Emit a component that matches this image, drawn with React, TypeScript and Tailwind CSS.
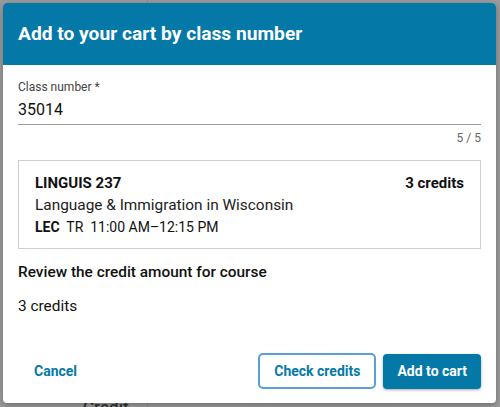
import React from "react";

export default function App() {
  return (
    <div
      className="relative w-[500px] h-[407px] bg-[#9b9b9b] overflow-hidden"
      style={{ fontFamily: "Roboto, 'Noto Sans', sans-serif" }}
    >
      {/* page content behind the overlay */}
      <div className="absolute left-[147px] top-0 w-px h-[407px] bg-[#8c8c8c]" />
      <div className="absolute left-[83px] top-[399px] text-[17px] font-medium text-[#333] leading-none">
        Credit
      </div>

      {/* dialog */}
      <div className="relative ml-[3px] mt-[3px] w-[493px] h-[400px] bg-white rounded-[4px] overflow-hidden shadow-[0_2px_6px_rgba(0,0,0,0.3)] flex flex-col">
        <div className="h-[62px] bg-[#0479a8] flex items-center px-[15px]">
          <h1 className="text-white text-[19.2px] font-bold leading-none">
            Add to your cart by class number
          </h1>
        </div>

        <div className="px-[15px] pt-[15px] flex flex-col">
          <label className="text-[12px] leading-[14px] text-[#444]">Class number *</label>
          <div className="mt-[6px] text-[16px] leading-[20px] text-[#111] pb-[4px] border-b border-[#9a9a9a]">
            35014
          </div>
          <div className="self-end mt-[6px] text-[12px] leading-[14px] text-[#666]">5 / 5</div>

          <div className="mt-[15px] border border-[#cfcfcf] px-[16px] pt-[12px] pb-[11px] flex flex-col">
            <div className="flex justify-between items-baseline">
              <span className="text-[15px] font-bold text-[#111] leading-[20px]">LINGUIS 237</span>
              <span className="text-[15px] font-bold text-[#111] leading-[20px]">3 credits</span>
            </div>
            <div className="mt-[2px] text-[15.4px] text-[#222] leading-[20px]">
              Language &amp; Immigration in Wisconsin
            </div>
            <div className="mt-[2px] text-[14px] text-[#111] leading-[20px] whitespace-pre">
              <span className="font-bold">LEC</span>
              {"  TR  11:00 AM\u201312:15 PM"}
            </div>
          </div>

          <div className="mt-[13px] text-[15.4px] font-medium text-[#111] leading-[20px]">
            Review the credit amount for course
          </div>
          <div className="mt-[14px] text-[15.4px] text-[#111] leading-[20px]">3 credits</div>
        </div>

        <div className="mt-auto mb-[14px] px-[15px] flex items-center">
          <button className="px-[16px] h-[35px] text-[14px] font-bold text-[#0479a8]">Cancel</button>
          <div className="flex-1" />
          <button className="h-[36px] px-[14px] rounded-[5px] border-2 border-[#5a9fd8] text-[14px] font-bold text-[#0479a8] bg-white">
            Check credits
          </button>
          <button className="ml-[7px] h-[35px] px-[14px] rounded-[4px] bg-[#0479a8] text-[14px] font-bold text-white shadow-[0_1px_3px_rgba(0,0,0,0.35)]">
            Add to cart
          </button>
        </div>
      </div>
    </div>
  );
}
